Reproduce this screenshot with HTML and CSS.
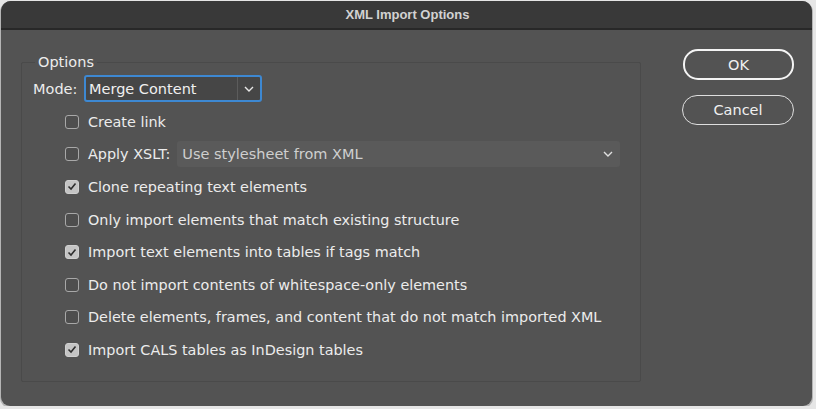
FILE: index.html
```html
<!DOCTYPE html>
<html>
<head>
<meta charset="utf-8">
<link rel="stylesheet" href="styles.css">
</head>
<body>
<div class="window">
  <div class="titlebar">XML Import Options</div>
  <div class="content">
    <fieldset class="group">
      <legend class="legend">Options</legend>
      <div class="mode-row">
        <span class="mode-label">Mode:</span>
        <div class="select">
          <span class="select-text">Merge Content</span>
          <span class="select-btn">
            <svg width="10" height="6" viewBox="0 0 10 6"><path d="M1 1 L5 5 L9 1" fill="none" stroke="#e8e8e8" stroke-width="1.4"/></svg>
          </span>
        </div>
      </div>
      <div class="rows">
        <div class="row"><span class="cb"></span><span class="lbl">Create link</span></div>
        <div class="row"><span class="cb"></span><span class="lbl">Apply XSLT:</span>
          <div class="xslt">
            <span class="xslt-text">Use stylesheet from XML</span>
            <svg width="10" height="6" viewBox="0 0 10 6"><path d="M1 1 L5 5 L9 1" fill="none" stroke="#e0e0e0" stroke-width="1.4"/></svg>
          </div>
        </div>
        <div class="row"><span class="cb checked"><svg width="10" height="9" viewBox="0 0 10 9"><path d="M1.5 4.5 L4 7 L8.5 1.5" fill="none" stroke="#2e2e2e" stroke-width="1.6"/></svg></span><span class="lbl">Clone repeating text elements</span></div>
        <div class="row"><span class="cb"></span><span class="lbl">Only import elements that match existing structure</span></div>
        <div class="row"><span class="cb checked"><svg width="10" height="9" viewBox="0 0 10 9"><path d="M1.5 4.5 L4 7 L8.5 1.5" fill="none" stroke="#2e2e2e" stroke-width="1.6"/></svg></span><span class="lbl">Import text elements into tables if tags match</span></div>
        <div class="row"><span class="cb"></span><span class="lbl">Do not import contents of whitespace-only elements</span></div>
        <div class="row"><span class="cb"></span><span class="lbl">Delete elements, frames, and content that do not match imported XML</span></div>
        <div class="row"><span class="cb checked"><svg width="10" height="9" viewBox="0 0 10 9"><path d="M1.5 4.5 L4 7 L8.5 1.5" fill="none" stroke="#2e2e2e" stroke-width="1.6"/></svg></span><span class="lbl">Import CALS tables as InDesign tables</span></div>
      </div>
    </fieldset>
    <div class="buttons">
      <div class="btn btn-primary">OK</div>
      <div class="btn">Cancel</div>
    </div>
  </div>
</div>
</body>
</html>
```

FILE: styles.css
```css
html, body {
  margin: 0;
  padding: 0;
  background: #e6e6e6;
}
body {
  padding: 1px 0 0 1px;
  font-family: "DejaVu Sans", "Liberation Sans", sans-serif;
}
.window {
  width: 811px;
  height: 405px;
  border-radius: 10px 10px 9px 9px;
  background: #535353;
  overflow: hidden;
  box-shadow: 0 1px 0 1px #b5b5b5;
}
.titlebar {
  height: 27px;
  line-height: 28px;
  background: #393939;
  border-bottom: 2px solid #282828;
  text-align: center;
  font-family: "Liberation Sans", Arial, sans-serif;
  font-weight: bold;
  font-size: 13px;
  color: #d2d2d2;
  padding-left: 2px;
}
.content {
  display: flex;
  align-items: flex-start;
}
.group {
  margin: 23px 0 0 20px;
  width: 620px;
  height: 329px;
  box-sizing: border-box;
  border: 1px solid #4a4a4a;
  border-radius: 2px;
  padding: 0 0 0 11px;
  min-width: 0;
}
.legend {
  padding: 0 3px;
  margin-left: 2px;
  font-size: 14.5px;
  line-height: 18px;
  color: #ececec;
}
.mode-row {
  display: flex;
  align-items: center;
  margin-top: 4px;
  height: 27px;
}
.mode-label {
  font-size: 14.5px;
  color: #ececec;
  width: 51px;
}
.select {
  width: 178px;
  height: 27px;
  box-sizing: border-box;
  border: 2px solid #3d88d2;
  border-radius: 3px;
  background: #464646;
  display: flex;
  align-items: center;
}
.select-text {
  flex: 1;
  padding-left: 3px;
  font-size: 14.5px;
  color: #f0f0f0;
}
.select-btn {
  width: 22px;
  height: 100%;
  border-left: 1px solid #5c5c5c;
  display: flex;
  align-items: center;
  justify-content: center;
}
.rows {
  margin-top: 3.5px;
  padding-left: 32px;
}
.row {
  height: 32.6px;
  display: flex;
  align-items: center;
}
.cb {
  width: 14px;
  height: 14px;
  box-sizing: border-box;
  border: 1px solid #a8a8a8;
  border-radius: 3px;
  background: #4e4e4e;
  margin-right: 9px;
  display: flex;
  align-items: center;
  justify-content: center;
  flex: none;
}
.cb.checked {
  background: #c4c4c4;
  border-color: #d0d0d0;
}
.lbl {
  font-size: 14.4px;
  color: #ececec;
  white-space: nowrap;
}
.xslt {
  margin-left: 7px;
  width: 443px;
  height: 26px;
  box-sizing: border-box;
  background: #5a5a5a;
  border-radius: 3px;
  display: flex;
  align-items: center;
  padding: 0 7px 0 5px;
}
.xslt-text {
  flex: 1;
  font-size: 14.5px;
  color: #cfcfcf;
}
.buttons {
  margin: 19px 0 0 41px;
  display: flex;
  flex-direction: column;
  gap: 15px;
}
.btn {
  width: 112px;
  height: 30px;
  box-sizing: border-box;
  border: 1px solid #dedede;
  border-radius: 15px;
  display: flex;
  align-items: center;
  justify-content: center;
  font-size: 14.5px;
  color: #f0f0f0;
}
.btn-primary {
  width: 111px;
  height: 31px;
  border: 2px solid #f4f4f4;
  margin-left: 1px;
}
```
